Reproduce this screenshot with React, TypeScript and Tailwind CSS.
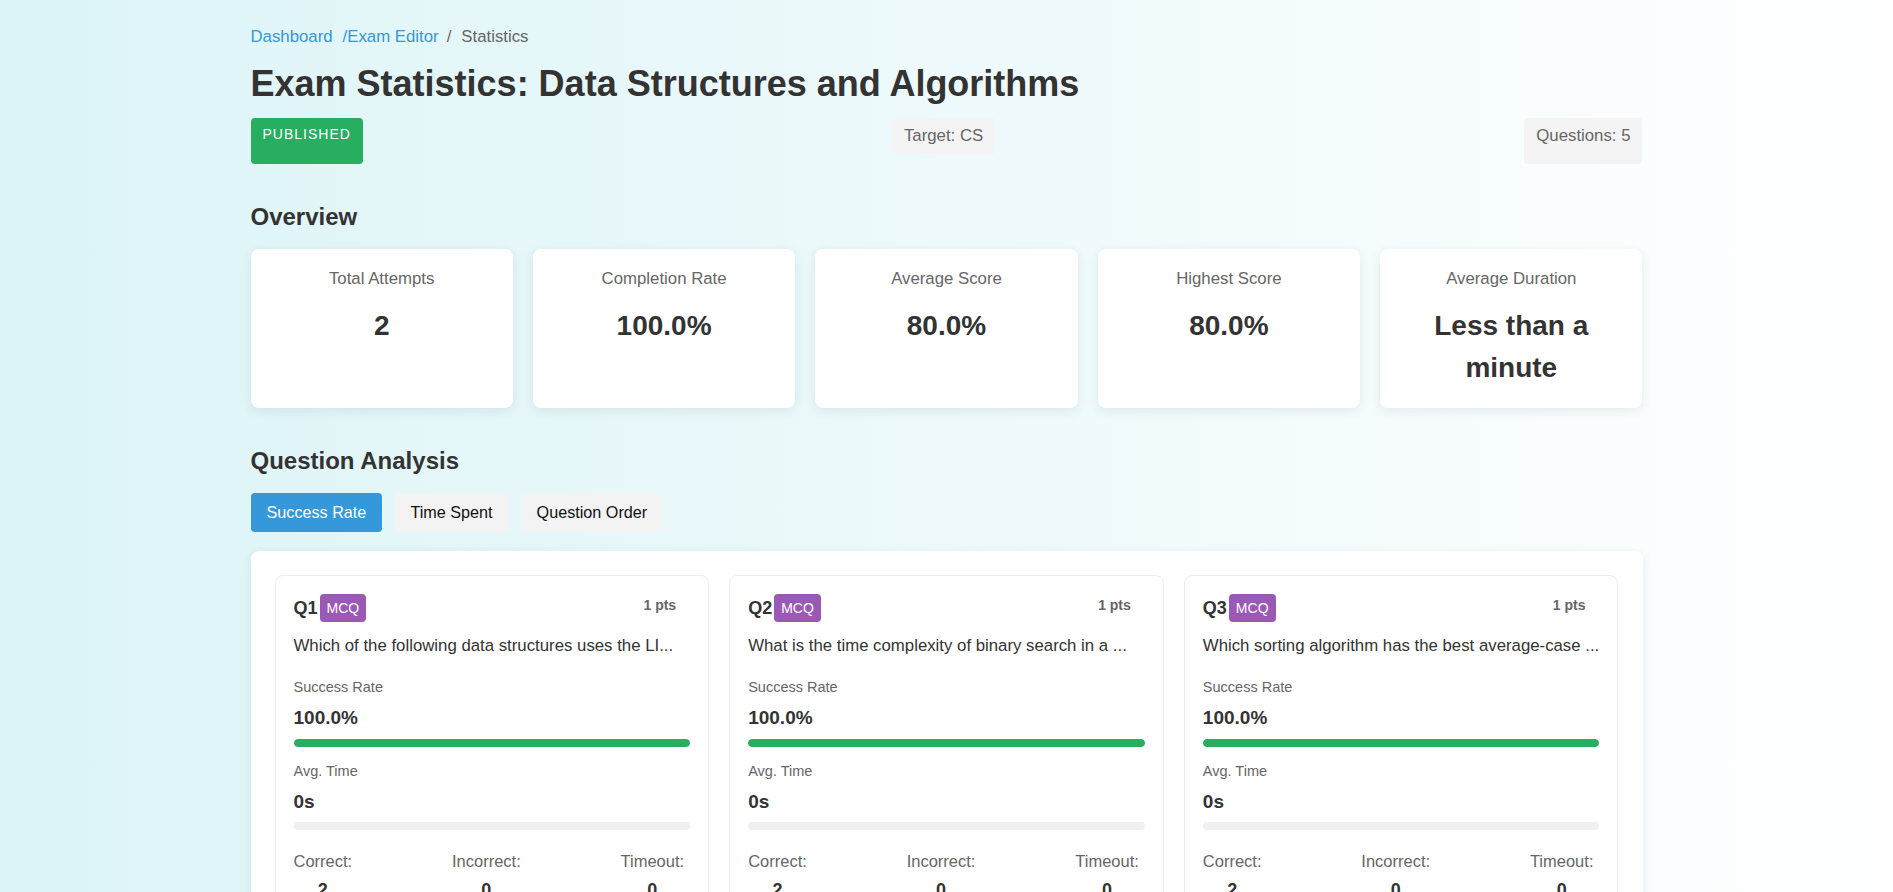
import React from "react";

const overview = [
  { label: "Total Attempts", value: "2" },
  { label: "Completion Rate", value: "100.0%" },
  { label: "Average Score", value: "80.0%" },
  { label: "Highest Score", value: "80.0%" },
  { label: "Average Duration", value: "Less than a minute" },
];

const questions = [
  { n: 1, text: "Which of the following data structures uses the LI...", correct: "2", incorrect: "0", timeout: "0" },
  { n: 2, text: "What is the time complexity of binary search in a ...", correct: "2", incorrect: "0", timeout: "0" },
  { n: 3, text: "Which sorting algorithm has the best average-case ...", correct: "2", incorrect: "0", timeout: "0" },
  { n: 4, text: "Which data structure is typically used to impleme...", correct: "2", incorrect: "0", timeout: "0" },
  { n: 5, text: "What is the worst-case time complexity of quicksor...", correct: "0", incorrect: "2", timeout: "0" },
];

function QuestionCard({ q }: { q: (typeof questions)[number] }) {
  const rate = q.n === 5 ? 0 : 100;
  return (
    <div className="rounded-lg border border-[#eeeeee] bg-white p-[18px]">
      <div className="flex items-start justify-between">
        <div className="flex items-center">
          <span className="text-[18px] font-bold leading-[27px] text-[#333]">Q{q.n}</span>
          <span className="ml-0.5 rounded bg-[#9b59b6] px-[7px] py-[6px] text-[14px] leading-[16px] text-white">
            MCQ
          </span>
        </div>
        <span className="mr-[14px] mt-px text-[14px] font-bold leading-[21px] text-[#666]">1 pts</span>
      </div>
      <p className="mt-3 text-[16.8px] leading-6 text-[#333]">{q.text}</p>

      <div className="mt-[19px] text-[14.5px] leading-[21px] text-[#666]">Success Rate</div>
      <div className="mt-1.5 text-[19px] font-bold leading-[28.5px] text-[#333]">{rate.toFixed(1)}%</div>
      <div className="mt-1.5 h-2 overflow-hidden rounded-full bg-[#eeeeee]">
        <div className="h-2 rounded-full bg-[#27ae60]" style={{ width: `${rate}%` }} />
      </div>

      <div className="mt-[14px] text-[14.5px] leading-[21px] text-[#666]">Avg. Time</div>
      <div className="mt-1.5 text-[19px] font-bold leading-[28.5px] text-[#333]">0s</div>
      <div className="mt-1.5 h-2 overflow-hidden rounded-full bg-[#f0f0f0]">
        <div className="h-2 rounded-full bg-[#3498db]" style={{ width: "0%" }} />
      </div>

      <div className="mt-[19px] flex justify-between pr-1.5">
        {[
          ["Correct:", q.correct],
          ["Incorrect:", q.incorrect],
          ["Timeout:", q.timeout],
        ].map(([l, v]) => (
          <div key={l} className="flex flex-col items-center">
            <span className="text-[16.5px] leading-6 text-[#666]">{l}</span>
            <span className="mt-1 text-[18px] font-bold leading-[27px] text-[#333]">{v}</span>
          </div>
        ))}
      </div>
    </div>
  );
}

export default function App() {
  return (
    <div className="min-h-screen bg-linear-to-r from-[#dcf4f7] to-white font-['Liberation_Sans',Arial,sans-serif] text-[#333]">
      <div className="mx-auto max-w-[1440px] px-6 pb-10 pt-[25px]">
        <nav className="flex items-center text-[16.8px] leading-6">
          <a className="text-[#3498db]" href="#">
            Dashboard
          </a>
          <a className="ml-[10px] text-[#3498db]" href="#">
            /Exam Editor
          </a>
          <span className="ml-[8px] mr-[10px] text-[#666]">/</span>
          <span className="text-[#666]">Statistics</span>
        </nav>

        <h1 className="mt-[13px] text-[36px] font-bold leading-[43px] text-[#333]">
          Exam Statistics: Data Structures and Algorithms
        </h1>

        <div className="mt-[13px] flex h-[46px] items-stretch justify-between">
          <span className="rounded bg-[#27ae60] px-3 pt-1.5 text-[14px] leading-[21px] tracking-[1px] text-white">
            PUBLISHED
          </span>
          <span className="self-start rounded bg-[#f4f4f4] px-3 py-1.5 text-[16.8px] leading-6 text-[#666]">
            Target: CS
          </span>
          <span className="rounded bg-[#f4f4f4] px-3 pt-1.5 text-[16.8px] leading-6 text-[#666]">Questions: 5</span>
        </div>

        <h2 className="mb-[18px] mt-[38px] text-[24px] font-bold leading-[29px] text-[#333]">Overview</h2>
        <div className="grid grid-cols-5 gap-5">
          {overview.map((o) => (
            <div
              key={o.label}
              className="rounded-lg bg-white px-5 pb-[19px] pt-[18px] text-center shadow-[0_3px_12px_rgba(0,40,60,0.09)]"
            >
              <div className="text-[16.8px] leading-6 text-[#666]">{o.label}</div>
              <div className="mt-[14px] text-[28px] font-bold leading-[42px] text-[#333]">{o.value}</div>
            </div>
          ))}
        </div>

        <h2 className="mb-[18px] mt-[38px] text-[24px] font-bold leading-[29px] text-[#333]">Question Analysis</h2>
        <div className="mb-[19px] flex gap-3">
          <button className="h-[39px] rounded bg-[#3498db] px-4 text-[16.2px] text-white">Success Rate</button>
          <button className="h-[39px] rounded bg-[#f3f3f3] px-4 text-[16.2px] text-[#111]">Time Spent</button>
          <button className="h-[39px] rounded bg-[#f3f3f3] px-4 text-[16.2px] text-[#111]">Question Order</button>
        </div>

        <div className="rounded-lg bg-white p-6 shadow-[0_3px_12px_rgba(0,40,60,0.09)]">
          <div className="grid grid-cols-3 gap-5">
            {questions.map((q) => (
              <QuestionCard key={q.n} q={q} />
            ))}
          </div>
        </div>
      </div>
    </div>
  );
}
